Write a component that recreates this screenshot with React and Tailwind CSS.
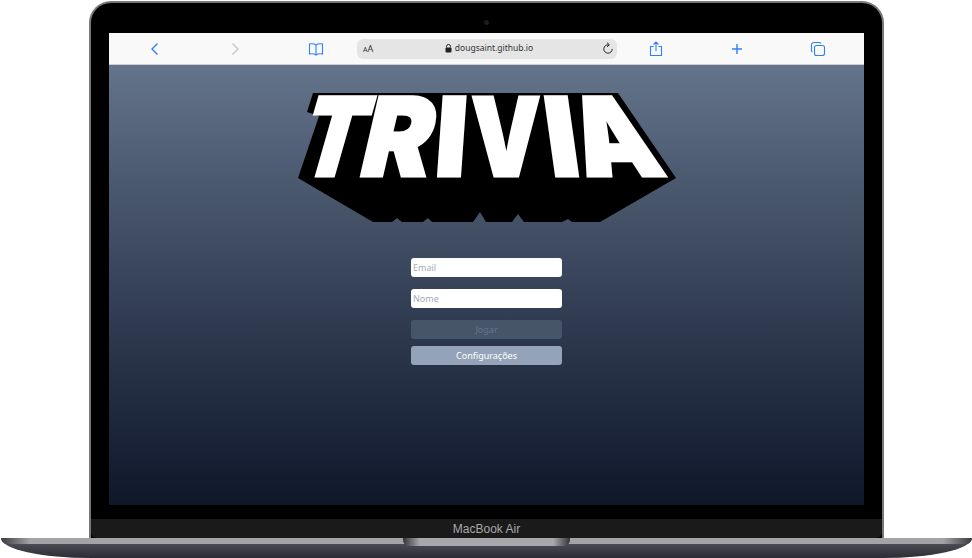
const letters = [
  { c: 'T', x: 325, skew: -16, sx: 0.82 },
  { c: 'R', x: 391, skew: -13, sx: 0.95 },
  { c: 'I', x: 449, skew: -4, sx: 0.98 },
  { c: 'V', x: 506, skew: 0, sx: 0.8 },
  { c: 'I', x: 567, skew: 8, sx: 0.98 },
  { c: 'A', x: 627, skew: 20, sx: 0.95 },
]

const shadow =
  '313,93 618,93 676,178 600,222 572,222 568,219 562,222 524,222 518,214 512,222 486,222 480,212 473,222 432,222 428,218 423,222 402,222 397,218 392,222 373,222 298,178 319,116 307,112'

function Letter({ c, x, skew, sx, stroke, width }) {
  return (
    <text
      transform={`translate(${x} 175.5) skewX(${skew}) scale(${sx} 1)`}
      textAnchor="middle"
      fontFamily="Inter, sans-serif"
      fontWeight="900"
      fontSize="109"
      fill={stroke}
      stroke={stroke}
      strokeWidth={width}
      strokeLinejoin="miter"
    >
      {c}
    </text>
  )
}

function Logo() {
  return (
    <svg width="400" height="140" viewBox="288 88 400 140" className="block overflow-visible">
      <polygon points={shadow} fill="#000" />
      {letters.map((l, i) => (
        <Letter key={i} {...l} stroke="#fff" width={3} />
      ))}
    </svg>
  )
}

function ToolbarIcon({ children, className = '' }) {
  return (
    <svg width="18" height="18" viewBox="0 0 18 18" fill="none" stroke="#2f80ff" strokeWidth="1.1" className={className}>
      {children}
    </svg>
  )
}

function BrowserBar() {
  return (
    <div className="flex h-[32px] items-center border-b border-[#cfcfcf] bg-[#f9f9f9]">
      <div className="flex w-[248px] items-center pl-[37px]">
        <ToolbarIcon>
          <path d="M11.5 3.5 L6 9 L11.5 14.5" strokeWidth="1.4" />
        </ToolbarIcon>
        <ToolbarIcon className="ml-[62px]">
          <path d="M6.5 3.5 L12 9 L6.5 14.5" stroke="#c4c4c4" strokeWidth="1.3" />
        </ToolbarIcon>
        <ToolbarIcon className="ml-[63px]">
          <path d="M9 5 C7.5 3.8 5 3.6 2.5 4 V14 C5 13.6 7.5 13.8 9 15 C10.5 13.8 13 13.6 15.5 14 V4 C13 3.6 10.5 3.8 9 5 Z M9 5 V15" />
        </ToolbarIcon>
      </div>
      <div className="flex h-[20px] w-[260px] items-center rounded-[6px] bg-[#e5e5e5] pl-[6px] pr-[3px] text-[#333] font-['Noto_Sans',sans-serif]">
        <span className="w-[13px] whitespace-nowrap text-[9px] leading-none">
          <span className="text-[7px]">A</span>A
        </span>
        <span className="flex flex-1 items-center justify-center gap-[3px] text-[8.5px] leading-none">
          <svg width="7" height="9" viewBox="0 0 7 9" fill="#222">
            <path d="M1.5 3.5 V2.5 a2 2 0 0 1 4 0 V3.5" fill="none" stroke="#222" />
            <rect x="0.5" y="3.5" width="6" height="5" rx="1" />
          </svg>
          dougsaint.github.io
        </span>
        <svg width="12" height="13" viewBox="0 0 12 13" fill="none" stroke="#222" strokeWidth="1">
          <path d="M6.5 2.8 A4.2 4.2 0 1 0 10.2 7" />
          <path d="M5 0.7 L7.4 2.8 L5 4.8" />
        </svg>
      </div>
      <div className="flex flex-1 items-center">
        <ToolbarIcon className="ml-[30px]">
          <path d="M6.5 6.5 H3.5 V15.5 H14.5 V6.5 H11.5 M9 11 V2.5 M6.5 4.5 L9 2 L11.5 4.5" />
        </ToolbarIcon>
        <ToolbarIcon className="ml-[63px]">
          <path d="M9 4 V14 M4 9 H14" strokeWidth="1.4" />
        </ToolbarIcon>
        <ToolbarIcon className="ml-[63px]">
          <rect x="5.5" y="5.5" width="10" height="10" rx="2" />
          <path d="M3.5 12 C2.8 11.6 2.5 11 2.5 10.4 V5 A2.5 2.5 0 0 1 5 2.5 H10.4 C11 2.5 11.6 2.8 12 3.5" />
        </ToolbarIcon>
      </div>
    </div>
  )
}

function LoginForm() {
  const field = "h-[19px] w-full rounded-[3px] bg-white px-[2px] text-[9px] outline-none placeholder:text-[#a5abb5]"
  return (
    <form className="mt-[193px] flex w-[151px] flex-col font-['Noto_Sans',sans-serif]">
      <input placeholder="Email" className={field} />
      <input placeholder="Nome" className={`${field} mt-[12px]`} />
      <button type="button" className="mt-[12px] h-[19px] rounded-[3px] bg-[#475569] text-[9px] text-[#64748b]">
        Jogar
      </button>
      <button type="button" className="mt-[7px] h-[19px] rounded-[3px] bg-[#94a3b8] text-[9px] text-white">
        Configurações
      </button>
    </form>
  )
}

function Screen() {
  return (
    <div className="relative flex h-[440px] flex-col items-center bg-gradient-to-b from-[#64748b] to-[#0f172a]">
      <div className="absolute left-[179px] top-[23px]">
        <Logo />
      </div>
      <LoginForm />
    </div>
  )
}

function Base() {
  return (
    <div className="relative ml-px h-[20px] w-[971px] overflow-hidden rounded-bl-[90px_20px] rounded-br-[90px_20px] bg-gradient-to-b from-[#5a5a64] to-[#2c2c34]">
      <div className="h-[6px] bg-[linear-gradient(90deg,#3a3a40_0%,#a4a4a8_3%,#a4a4a8_97%,#3a3a40_100%)]" />
      <div className="absolute left-[402px] top-0 h-[8px] w-[167px] rounded-b-[6px] bg-[linear-gradient(90deg,#333338_0%,#a8a8ac_10%,#a8a8ac_90%,#333338_100%)]" />
    </div>
  )
}

export default function App() {
  return (
    <div className="h-[558px] w-[972px] overflow-hidden bg-white">
      <div className="ml-[89px] mt-px h-[537px] w-[795px] rounded-t-[22px] bg-[#77777c] p-[2px] pb-0">
        <div className="flex h-full flex-col rounded-t-[20px] bg-black">
          <div className="flex h-[30px] items-start justify-center pt-[17px]">
            <div className="h-[5px] w-[5px] rounded-full bg-[#1c1c20]" />
          </div>
          <div className="mx-[18px] mt-0">
            <BrowserBar />
            <Screen />
          </div>
          <div className="mt-[14px] flex h-[19px] items-center justify-center rounded-b-[6px] bg-[#1a1a1a] text-[12px] text-[#a8a8a8] font-['Liberation_Sans',sans-serif]">
            MacBook Air
          </div>
        </div>
      </div>
      <Base />
    </div>
  )
}
